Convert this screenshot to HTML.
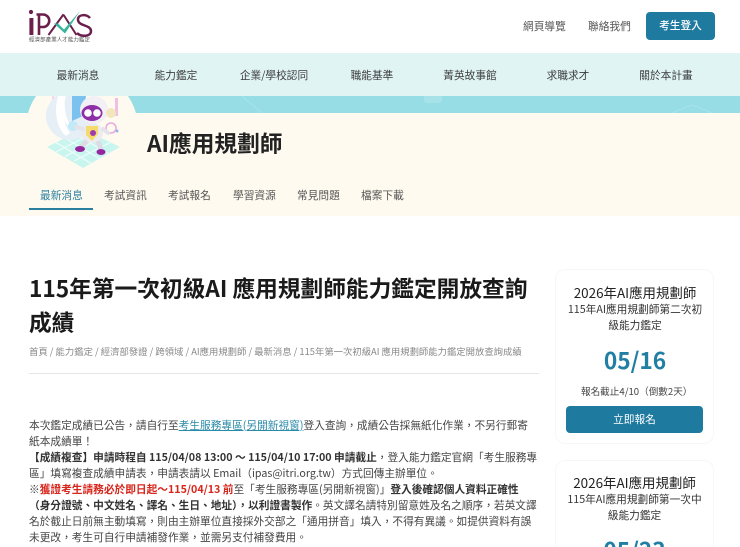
<!DOCTYPE html>
<html lang="zh-Hant"><head><meta charset="utf-8"><title>iPAS</title>
<style>
html,body{margin:0;padding:0;background:#fff;width:740px;height:547px;overflow:hidden}
#p{width:740px;height:547px;overflow:hidden;position:relative;font-family:"Noto Sans CJK TC","Liberation Sans",sans-serif;color:#333}
.a{position:absolute;white-space:nowrap}
.c{transform:translateX(-50%)}
.nav{font-size:10.7px;line-height:16px;top:67.5px;color:#3c3c3c}
.tab{font-size:10.7px;line-height:16px;top:187.5px;color:#555}
.b{font-size:10.7px;line-height:16px;color:#444}
.b b{color:#333}
.card{position:absolute;left:555px;width:159px;background:#fff;border:1px solid #f7f7f7;border-radius:10px;box-sizing:border-box}
</style></head><body><div id="p">
<svg class="a" style="left:0;top:0" width="100" height="50" viewBox="0 0 100 50">
<circle cx="31" cy="12" r="2.1" fill="#6b1f4b"/><rect x="29.4" y="18" width="4" height="17" fill="#6b1f4b"/>
<path d="M36.500 14.500h6.500a6 6 0 0 1 0 12.500h-3.500M39 14.500V35" fill="none" stroke="#6b1f4b" stroke-width="2.600"/>
<path d="M48.500 35L63 15l1 .5L76.500 35" fill="none" stroke="#6b1f4b" stroke-width="2"/>
<path d="M54 23.500l4 0 6 6L80 11 65 33.500z" fill="#38b49a"/>
<path d="M90 18c-3-4-12-4-12 1.500 0 7 13 5 13 11.500 0 6-10 6-14 2" fill="none" stroke="#6b1f4b" stroke-width="2.500"/>
<text x="29" y="41.500" font-size="5.500" fill="#555" textLength="61" font-family="Noto Sans CJK TC">經濟部產業人才能力鑑定</text>
</svg>
<div class="a" style="left:523px;top:19px;font-size:10.7px;line-height:16px;color:#555">網頁導覽</div>
<div class="a" style="left:588px;top:19px;font-size:10.7px;line-height:16px;color:#555">聯絡我們</div>
<div class="a" style="left:646px;top:12px;width:69px;height:28px;background:#1f7a9f;border-radius:4px;color:#fff;font-size:10.7px;font-weight:500;line-height:28px;text-align:center">考生登入</div>

<div class="a" style="left:0;top:53px;width:740px;height:43px;background:#e0f4f4"></div>
<div class="a" style="left:0;top:96px;width:740px;height:17px;background:#96dde5"></div>
<div class="a" style="left:424px;top:96px;width:18px;height:7px;background:#a6e2e8;border-radius:0 0 3px 3px"></div>
<svg class="a" style="left:640px;top:100px" width="80" height="13" viewBox="0 0 80 13"><path d="M32 13L52 5 72 13" fill="none" stroke="#a8e4ea" stroke-width="1"/></svg>
<svg class="a" style="left:230px;top:96px" width="60" height="17" viewBox="0 0 60 17"><path d="M12 0L32 17" stroke="#a8e4ea" stroke-width="1"/></svg>
<div class="a" style="left:0;top:113px;width:740px;height:103px;background:#fffaef"></div>
<div class="a nav c" style="left:78px">最新消息</div>
<div class="a nav c" style="left:176px">能力鑑定</div>
<div class="a nav c" style="left:274px">企業/學校認同</div>
<div class="a nav c" style="left:372px">職能基準</div>
<div class="a nav c" style="left:470px">菁英故事館</div>
<div class="a nav c" style="left:568px">求職求才</div>
<div class="a nav c" style="left:666px">關於本計畫</div>

<svg class="a" style="left:0;top:96px" width="150" height="80" viewBox="0 96 150 80">
<circle cx="82" cy="128" r="56" fill="#fffaef"/>
<path d="M47 147L83 129 120 147 83 168z" fill="#c9f5ef"/>
<path d="M56 142.500L92 164M65 138L101 159.500M74 133.500L110 154.500M56 152L92 133.500M65 156.500L101 138M74 161L110 142.500" stroke="#effcfa" stroke-width="1.200" fill="none"/>
<path d="M58 96h6v40h-6z" fill="#f4eef6"/>
<rect x="52" y="96" width="2.500" height="32" fill="#f3d9ec"/>
<rect x="115" y="98" width="3" height="18" fill="#f0c0e4"/>
<circle cx="52" cy="112" r="3" fill="none" stroke="#8fb8e6" stroke-width="1.300"/>
<circle cx="70" cy="116" r="24" fill="#e6eef6"/>
<path d="M58 96c-4 14-2 32 8 40l4-3c-7-9-8-24-4-37z" fill="#fff"/>
<path d="M72 96h14l-3 20-11 5z" fill="#7cc2ee"/>
<path d="M62 96c-2 10 0 22 6 30l2-1c-5-8-6-19-5-29z" fill="#ffffff"/>
<circle cx="73" cy="126" r="5" fill="#bfeaf8"/>
<circle cx="111" cy="128" r="5" fill="none" stroke="#eaa8dc" stroke-width="1.500"/>
<circle cx="117" cy="131" r="1.500" fill="#8fb8e6"/>
<circle cx="94" cy="110" r="14" fill="#f2f0f4"/>
<circle cx="111" cy="113" r="5" fill="#f2e6bd"/>
<ellipse cx="92" cy="113" rx="10.500" ry="8" fill="#8f2fa8"/>
<circle cx="88" cy="113" r="3.800" fill="#fff"/><circle cx="97" cy="113" r="3.800" fill="#fff"/>
<ellipse cx="92" cy="133" rx="11" ry="10" fill="#ecebf0"/>
<path d="M86 126h12v8l-6 7-6-6z" fill="#f4dc6c"/><circle cx="93" cy="133" r="3" fill="#a03cb0"/>
<path d="M83 129l-7 -2M103 129l5 4" stroke="#e4e3ea" stroke-width="4" stroke-linecap="round"/>
<path d="M87 141l-6 6M98 141l3 8" stroke="#dcdce4" stroke-width="5"/>
<ellipse cx="80" cy="149" rx="5" ry="3" fill="#96289f"/><ellipse cx="101" cy="152" rx="4.500" ry="3" fill="#96289f"/>
</svg>
<div class="a" style="left:147px;top:126px;font-size:22.7px;line-height:34px;font-weight:700;color:#222">AI應用規劃師</div>

<div class="a tab" style="left:40px;color:#2a7f9f">最新消息</div>
<div class="a" style="left:29px;top:208px;width:64px;height:1.5px;background:#2a7f9f"></div>
<div class="a tab" style="left:104px">考試資訊</div>
<div class="a tab" style="left:168px">考試報名</div>
<div class="a tab" style="left:233px">學習資源</div>
<div class="a tab" style="left:297px">常見問題</div>
<div class="a tab" style="left:361px">檔案下載</div>

<div class="a" style="left:29px;top:271px;font-size:22.7px;line-height:34px;font-weight:700;color:#1a1a1a">115年第一次初級AI 應用規劃師能力鑑定開放查詢</div>
<div class="a" style="left:29px;top:305px;font-size:22.7px;line-height:34px;font-weight:700;color:#1a1a1a">成績</div>
<div class="a" style="left:29px;top:344px;font-size:9.36px;line-height:14px;color:#888">首頁 / 能力鑑定 / 經濟部發證 / 跨領域 / AI應用規劃師 / 最新消息 / 115年第一次初級AI 應用規劃師能力鑑定開放查詢成績</div>
<div class="a" style="left:29px;top:373px;width:510px;height:1px;background:#e6e6e6"></div>

<div class="a b" style="left:29px;top:417.5px">本次鑑定成績已公告，請自行至<span style="color:#2a8aa8;text-decoration:underline">考生服務專區(另開新視窗)</span>登入查詢，成績公告採無紙化作業，不另行郵寄</div>
<div class="a b" style="left:29px;top:433.5px">紙本成績單！</div>
<div class="a b" style="left:29px;top:449.5px"><b>【成績複查】申請時程自 115/04/08 13:00 ～ 115/04/10 17:00 申請截止</b>，登入能力鑑定官網「考生服務專</div>
<div class="a b" style="left:29px;top:465.5px">區」填寫複查成績申請表，申請表請以 Email（ipas@itri.org.tw）方式回傳主辦單位。</div>
<div class="a b" style="left:29px;top:481.5px">※<b style="color:#d8261c">獲證考生請務必於即日起～115/04/13 前</b>至「考生服務專區(另開新視窗)」<b>登入後確認個人資料正確性</b></div>
<div class="a b" style="left:29px;top:497.5px"><b>（身分證號、中文姓名、譯名、生日、地址），以利證書製作</b>。英文譯名請特別留意姓及名之順序，若英文譯</div>
<div class="a b" style="left:29px;top:513.5px">名於截止日前無主動填寫，則由主辦單位直接採外交部之「通用拼音」填入，不得有異議。如提供資料有誤</div>
<div class="a b" style="left:29px;top:529.5px;height:17px;overflow:hidden">未更改，考生可自行申請補發作業，並需另支付補發費用。</div>

<div class="card" style="top:269px;height:175px"></div>
<div class="a c" style="left:635px;top:281.5px;font-size:13.45px;line-height:20px;color:#222">2026年AI應用規劃師</div>
<div class="a c" style="left:635px;top:302px;font-size:10.7px;line-height:16px;color:#333">115年AI應用規劃師第二次初</div>
<div class="a c" style="left:635px;top:318px;font-size:10.7px;line-height:16px;color:#333">級能力鑑定</div>
<div class="a c" style="left:635px;top:344px;font-size:22.7px;line-height:32px;font-weight:700;color:#217fa3">05/16</div>
<div class="a" style="left:581px;top:384px;font-size:9.6px;line-height:14px;color:#444">報名截止4/10（倒數2天）</div>
<div class="a" style="left:566px;top:406px;width:137px;height:27px;background:#1f7a9f;border-radius:4px;color:#fff;font-size:10.7px;line-height:27px;text-align:center">立即報名</div>

<div class="a" style="left:555px;top:460px;width:159px;height:87px;overflow:hidden;background:#fff;border:1px solid #f7f7f7;border-bottom:0;border-radius:10px 10px 0 0;box-sizing:border-box">
<div style="position:absolute;left:0;right:0;text-align:center;top:11px;font-size:13.45px;line-height:20px;color:#222">2026年AI應用規劃師</div>
<div style="position:absolute;left:0;right:0;text-align:center;top:31px;font-size:10.7px;line-height:16px;color:#333">115年AI應用規劃師第一次中</div>
<div style="position:absolute;left:0;right:0;text-align:center;top:47px;font-size:10.7px;line-height:16px;color:#333">級能力鑑定</div>
<div style="position:absolute;left:0;right:0;text-align:center;top:73px;font-size:22.7px;line-height:32px;height:13px;overflow:hidden;font-weight:700;color:#217fa3">05/23</div>
</div>
</div></body></html>
